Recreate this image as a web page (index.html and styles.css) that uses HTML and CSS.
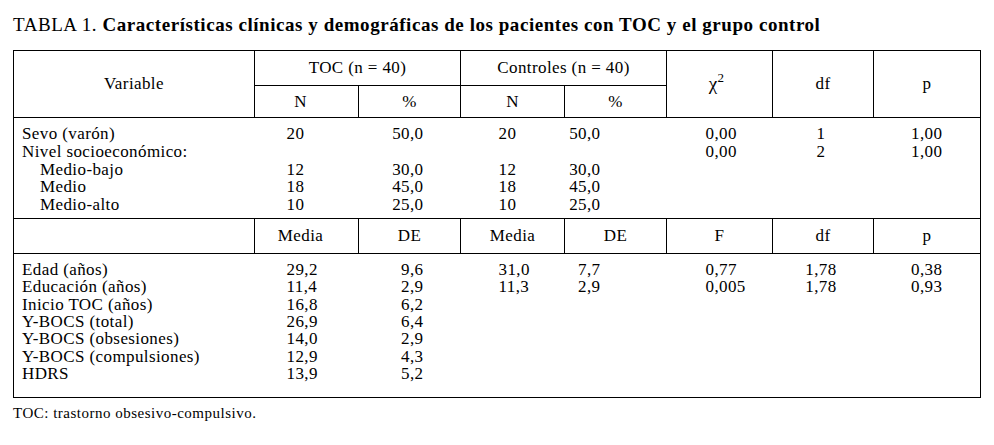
FILE: index.html
```html
<!DOCTYPE html>
<html lang="es">
<head>
<meta charset="utf-8">
<title>Tabla 1</title>
<link rel="stylesheet" href="styles.css">
</head>
<body>
<div class="page">
  <h1 class="title"><span class="label">TABLA 1.</span> <b>Características clínicas y demográficas de los pacientes con TOC y el grupo control</b></h1>
  <table class="data">
    <colgroup>
      <col class="c-var"><col class="c-n1"><col class="c-p1"><col class="c-n2"><col class="c-p2"><col class="c-stat"><col class="c-df"><col class="c-p">
    </colgroup>
    <thead>
      <tr class="h1">
        <th rowspan="2">Variable</th>
        <th colspan="2">TOC (n = 40)</th>
        <th colspan="2">Controles (n = 40)</th>
        <th rowspan="2" class="chi">χ<sup>2</sup></th>
        <th rowspan="2">df</th>
        <th rowspan="2">p</th>
      </tr>
      <tr class="h2">
        <th class="hn">N</th>
        <th>%</th>
        <th>N</th>
        <th>%</th>
      </tr>
    </thead>
    <tbody class="sec sec1">
      <tr class="first"><td>Sevo (varón)</td><td class="n1">20</td><td class="p1">50,0</td><td class="n2">20</td><td class="p2">50,0</td><td class="st">0,00</td><td class="df">1</td><td class="pv">1,00</td></tr>
      <tr><td>Nivel socioeconómico:</td><td class="n1"></td><td class="p1"></td><td class="n2"></td><td class="p2"></td><td class="st">0,00</td><td class="df">2</td><td class="pv">1,00</td></tr>
      <tr><td class="ind">Medio-bajo</td><td class="n1">12</td><td class="p1">30,0</td><td class="n2">12</td><td class="p2">30,0</td><td></td><td></td><td></td></tr>
      <tr><td class="ind">Medio</td><td class="n1">18</td><td class="p1">45,0</td><td class="n2">18</td><td class="p2">45,0</td><td></td><td></td><td></td></tr>
      <tr class="last"><td class="ind">Medio-alto</td><td class="n1">10</td><td class="p1">25,0</td><td class="n2">10</td><td class="p2">25,0</td><td></td><td></td><td></td></tr>
    </tbody>
    <tbody class="subhead">
      <tr><th></th><th class="hn">Media</th><th>DE</th><th>Media</th><th>DE</th><th>F</th><th>df</th><th>p</th></tr>
    </tbody>
    <tbody class="sec sec2">
      <tr class="first"><td>Edad (años)</td><td class="n1">29,2</td><td class="p1">9,6</td><td class="n2">31,0</td><td class="p2">7,7</td><td class="st">0,77</td><td class="df">1,78</td><td class="pv">0,38</td></tr>
      <tr><td>Educación (años)</td><td class="n1">11,4</td><td class="p1">2,9</td><td class="n2">11,3</td><td class="p2">2,9</td><td class="st">0,005</td><td class="df">1,78</td><td class="pv">0,93</td></tr>
      <tr><td>Inicio TOC (años)</td><td class="n1">16,8</td><td class="p1">6,2</td><td></td><td></td><td></td><td></td><td></td></tr>
      <tr><td>Y-BOCS (total)</td><td class="n1">26,9</td><td class="p1">6,4</td><td></td><td></td><td></td><td></td><td></td></tr>
      <tr><td>Y-BOCS (obsesiones)</td><td class="n1">14,0</td><td class="p1">2,9</td><td></td><td></td><td></td><td></td><td></td></tr>
      <tr><td>Y-BOCS (compulsiones)</td><td class="n1">12,9</td><td class="p1">4,3</td><td></td><td></td><td></td><td></td><td></td></tr>
      <tr class="last"><td>HDRS</td><td class="n1">13,9</td><td class="p1">5,2</td><td></td><td></td><td></td><td></td><td></td></tr>
    </tbody>
  </table>
  <p class="note">TOC: trastorno obsesivo-compulsivo.</p>
</div>
</body>
</html>
```

FILE: styles.css
```css
html, body {
  margin: 0;
  padding: 0;
  background: #fff;
  color: #000;
}

.page {
  padding: 13px 0 0 13px;
  font-family: "Liberation Serif", "Times New Roman", serif;
}

.title {
  margin: 0;
  font-size: 19px;
  font-weight: normal;
  line-height: 24px;
  letter-spacing: 0.55px;
  white-space: nowrap;
}

.title b {
  font-weight: bold;
}

.data {
  margin-top: 13px;
  border-collapse: collapse;
  table-layout: fixed;
  width: 967px;
  border: 1px solid #000;
  font-size: 17px;
  letter-spacing: 0.4px;
}

.c-var { width: 241px; }
.c-n1 { width: 104px; }
.c-p1 { width: 102px; }
.c-n2 { width: 104px; }
.c-p2 { width: 102px; }
.c-stat { width: 106px; }
.c-df { width: 101px; }
.c-p { width: 107px; }

th {
  font-weight: normal;
  border: 1px solid #000;
  padding: 0;
  text-align: center;
  vertical-align: middle;
  line-height: 18px;
}

.h1 th { height: 34px; }
.h2 th { height: 31px; }
.subhead th { height: 34px; }

.chi {
  font-size: 19px;
  padding-right: 6px;
}

.chi sup {
  font-size: 13px;
  vertical-align: 8px;
  line-height: 0;
}

.hn { padding-right: 12px; }

td {
  padding: 0;
  white-space: nowrap;
  vertical-align: top;
  text-align: left;
}

.sec1 td { line-height: 17.8px; }
.sec2 td { line-height: 17.33px; }

.sec tr.first td { padding-top: 7px; }
.sec1 tr.last td { padding-bottom: 4px; }
.sec2 tr.last td { padding-bottom: 15px; }

td:first-child { padding-left: 8px; }
td.ind { padding-left: 26px; }
td.n1 { padding-left: 32px; }
td.p1 { text-align: right; padding-right: 37px; }
td.n2 { padding-left: 38px; }
td.p2 { text-align: right; padding-right: 66px; }
td.st { padding-left: 39px; }
td.df { text-align: center; padding-right: 4px; }
td.pv { text-align: center; }

.note {
  margin: 6px 0 0 0;
  font-size: 15px;
  line-height: 18px;
  letter-spacing: 0.5px;
}
```
